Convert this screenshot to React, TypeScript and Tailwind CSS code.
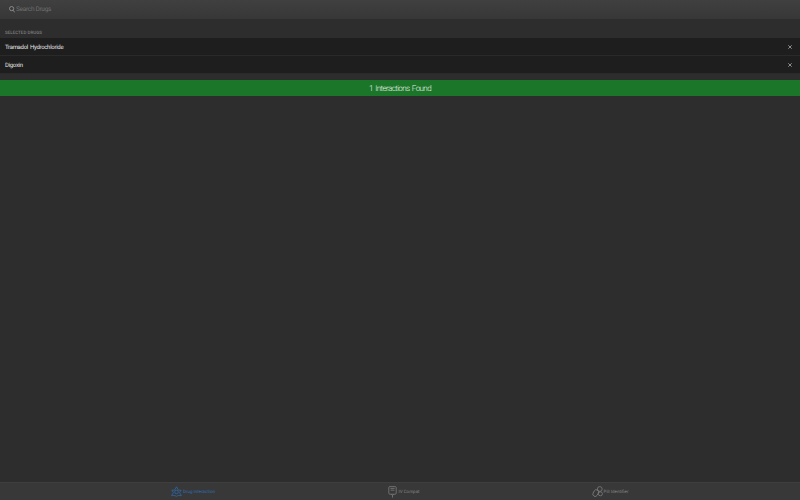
const SearchIcon = () => (
  <svg width="6" height="7" viewBox="0 0 6 7" fill="none" stroke="#9a9a9a" strokeWidth="0.8">
    <circle cx="2.6" cy="2.6" r="2.1" />
    <path d="M4.1 4.2l1.6 2.2" />
  </svg>
);

const Close = () => (
  <svg width="4" height="4" viewBox="0 0 4 4" fill="none" stroke="#a8a8a8" strokeWidth="0.8">
    <path d="M0.3 0.3l3.4 3.4M3.7 0.3l-3.4 3.4" />
  </svg>
);

const InteractionIcon = () => (
  <svg width="11" height="11" viewBox="0 0 11 11" fill="none" stroke="#2f6fb5" strokeWidth="0.7">
    <path d="M5.5 0.8L7.5 4.2H10.2L8.6 6.6L10.4 9.6H6.8L5.5 10.4L4 9.6H0.6L2.4 6.6L0.8 4.2H3.5Z" />
    <circle cx="5.5" cy="6" r="1.8" />
  </svg>
);

const CompatIcon = () => (
  <svg width="9" height="12" viewBox="0 0 9 12" fill="none" stroke="#858585" strokeWidth="0.7">
    <rect x="0.8" y="0.6" width="7.4" height="7.6" rx="1" />
    <path d="M2.4 2.4h4.2M2.6 4.2h3.8M3.4 8.2l1.1 1.4 1.1-1.4M4.5 9.6v2" />
  </svg>
);

const PillIcon = () => (
  <svg width="11" height="11" viewBox="0 0 11 11" fill="none" stroke="#858585" strokeWidth="0.7">
    <rect x="1.4" y="3.6" width="4.6" height="7" rx="2.3" transform="rotate(28 3.7 7.1)" />
    <circle cx="7.8" cy="3" r="2.4" />
    <circle cx="8.4" cy="7.8" r="2" />
  </svg>
);

const rows = ["Tramadol Hydrochloride", "Digoxin"];

export default function App() {
  return (
    <div className="w-[800px] h-[500px] flex flex-col overflow-hidden bg-[#2d2d2d] font-['Roboto',sans-serif] antialiased [text-rendering:geometricPrecision] whitespace-nowrap">
      <div className="h-[19px] flex items-center gap-[1px] pl-[9px] bg-gradient-to-b from-[#404040] to-[#373737] text-[#707070] text-[6.5px] tracking-[-0.3px]">
        <SearchIcon />
        <span className="mt-[1px]">Search Drugs</span>
      </div>
      <div className="h-[19px] flex items-end pl-[5px] text-[4.5px] font-medium text-[#7c7c7c] uppercase">Selected Drugs</div>
      <div className="flex flex-col">
        {rows.map((name) => (
          <div key={name} className="h-[18px] flex items-center justify-between pl-[5px] pr-[8px] bg-[#1e1e1e] border-b border-[#2a2a2a] text-[6px] tracking-[-0.3px] [word-spacing:0.8px] text-[#e4e4e4]">
            <span className="mt-[1px]">{name}</span>
            <Close />
          </div>
        ))}
      </div>
      <div className="mt-[6px] h-[16px] flex items-center justify-center bg-[#1c7629] text-[8px] font-light tracking-[-0.6px] [word-spacing:1px] text-[#e6f0e6]">
        <span className="mt-[1px]">1 Interactions Found</span>
      </div>
      <div className="flex-1" />
      <div className="h-[18px] flex items-center pl-[89px] bg-[#383838] border-t border-[#3f3f3f] text-[4.5px] text-[#858585]">
        <div className="w-[208px] flex items-center justify-center gap-[1px] text-[#2f6fb5]">
          <InteractionIcon />
          <span className="mt-[3px]">Drug Interaction</span>
        </div>
        <div className="w-[214px] flex items-center justify-center gap-[1px]">
          <CompatIcon />
          <span className="mt-[3px]">IV Compat</span>
        </div>
        <div className="w-[198px] flex items-center justify-center gap-[1px]">
          <PillIcon />
          <span className="mt-[3px]">Pill Identifier</span>
        </div>
      </div>
    </div>
  );
}
